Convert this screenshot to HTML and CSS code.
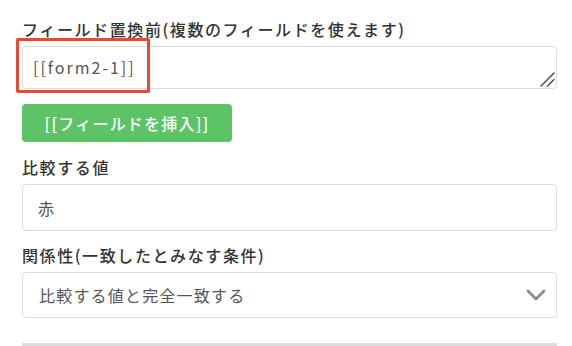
FILE: index.html
```html
<!DOCTYPE html>
<html lang="ja">
<head>
<meta charset="utf-8">
<link rel="stylesheet" href="styles.css">
</head>
<body>
<div class="form">
  <div class="group group-first">
    <label class="label">フィールド置換前(複数のフィールドを使えます)</label>
    <div class="textarea-wrap">
      <textarea class="textarea">[[form2-1]]</textarea>
      <svg class="grip" width="16" height="16" viewBox="0 0 16 16"><path d="M2 15 L15 2 M8.5 15 L15 8.5" fill="none" stroke="#555" stroke-width="1.6" stroke-linecap="round"/></svg>
      <div class="highlight"></div>
    </div>
    <button class="btn" type="button">[[フィールドを挿入]]</button>
  </div>
  <div class="group">
    <label class="label">比較する値</label>
    <input class="input" type="text" value="赤">
  </div>
  <div class="group">
    <label class="label">関係性(一致したとみなす条件)</label>
    <div class="select-wrap">
      <select class="select">
        <option>比較する値と完全一致する</option>
      </select>
      <svg class="chevron" width="20" height="12" viewBox="0 0 20 12"><path d="M2 2 L10 10 L18 2" fill="none" stroke="#8a8a8a" stroke-width="2.6" stroke-linecap="round" stroke-linejoin="round"/></svg>
    </div>
  </div>
  <div class="divider"></div>
</div>
</body>
</html>
```
FILE: styles.css
```css
html, body {
  margin: 0;
  padding: 0;
  background: #fff;
}
body {
  font-family: "Noto Sans CJK JP", sans-serif;
  color: #333;
}
.form {
  width: 535px;
  padding: 17px 0 0 22px;
}
.group {
  display: flex;
  flex-direction: column;
  align-items: flex-start;
  margin-bottom: 12px;
}
.group-first {
  margin-bottom: 13px;
}
.label {
  display: block;
  font-size: 16px;
  line-height: 24px;
  font-weight: 500;
  letter-spacing: 1.6px;
  color: #333;
  margin-bottom: 5px;
}
.textarea-wrap {
  position: relative;
  width: 535px;
  height: 43px;
}
.textarea {
  box-sizing: border-box;
  display: block;
  width: 535px;
  height: 43px;
  margin: 0;
  padding: 8px 10px;
  border: 1px solid #dcdcdc;
  border-radius: 4px;
  font-family: "Noto Sans CJK JP", sans-serif;
  font-size: 16px;
  line-height: 24px;
  letter-spacing: 2px;
  color: #555;
  resize: none;
  overflow: hidden;
}
.grip {
  position: absolute;
  right: 2px;
  bottom: 2px;
  pointer-events: none;
}
.highlight {
  position: absolute;
  left: -6px;
  top: -8px;
  width: 128px;
  height: 49px;
  border: 3px solid #e64a33;
  border-radius: 2px;
  pointer-events: none;
}
.btn {
  margin-top: 15px;
  width: 210px;
  height: 38px;
  border: none;
  border-radius: 4px;
  background: #5cc466;
  color: #fff;
  font-family: "Noto Sans CJK JP", sans-serif;
  font-size: 16px;
  font-weight: 500;
  letter-spacing: 1.2px;
  padding: 0;
}
.input {
  box-sizing: border-box;
  width: 535px;
  height: 47px;
  margin: 0;
  padding: 0 15px;
  border: 1px solid #dcdcdc;
  border-radius: 4px;
  font-family: "Noto Sans CJK JP", sans-serif;
  font-size: 16px;
  letter-spacing: 1px;
  color: #555;
  outline: none;
}
.select-wrap {
  position: relative;
  width: 535px;
  height: 46px;
}
.select {
  box-sizing: border-box;
  width: 535px;
  height: 46px;
  margin: 0;
  padding: 0 16px;
  border: 1px solid #dcdcdc;
  border-radius: 4px;
  background: #fff;
  -webkit-appearance: none;
  appearance: none;
  font-family: "Noto Sans CJK JP", sans-serif;
  font-size: 16px;
  letter-spacing: 1.2px;
  color: #555;
}
.chevron {
  position: absolute;
  right: 11px;
  top: 17px;
  pointer-events: none;
}
.divider {
  margin-top: 25px;
  width: 535px;
  height: 3px;
  background: #dddddd;
}
```
